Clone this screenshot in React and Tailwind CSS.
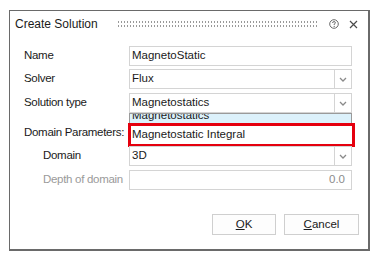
import React from 'react';

const font = { fontFamily: '"Liberation Sans", Arial, sans-serif' };

function Chevron({ color = '#8a8a8a' }) {
  return (
    <svg width="8" height="5" viewBox="0 0 8 5">
      <polyline points="1,1 4,4 7,1" fill="none" stroke={color} strokeWidth="1.3" />
    </svg>
  );
}

function TextBox({ value, muted, right }) {
  return (
    <div className={`h-[20px] w-[223px] border border-[#d4d4d4] bg-white flex items-center px-[2px] ${right ? 'justify-end pr-[6px]' : ''}`}>
      <span className={muted ? 'text-[#8c8c8c]' : 'text-[#1a1a1a]'}>{value}</span>
    </div>
  );
}

function Select({ value, children }) {
  return (
    <div className="relative h-[20px] w-[223px] border border-[#d4d4d4] bg-white flex">
      <div className="flex-1 flex items-center px-[2px] text-[#1a1a1a]">{value}</div>
      <div className="w-[17px] border-l border-[#d4d4d4] flex items-center justify-center">
        <Chevron />
      </div>
      {children}
    </div>
  );
}

function Row({ label, indent, muted, children, className = '' }) {
  return (
    <div className={`flex items-center h-[20px] ${className}`}>
      <div className={`w-[105px] shrink-0 whitespace-nowrap tracking-[-0.3px] ${indent ? 'pl-[19px]' : ''} ${muted ? 'text-[#9a9a9a]' : 'text-[#1a1a1a]'}`}>{label}</div>
      {children}
    </div>
  );
}

export default function App() {
  return (
    <div className="w-[378px] h-[259px] bg-white pt-[10px] pl-[9px] text-[11.5px] leading-none" style={font}>
      <div className="w-[361px] h-[241px] border border-[#6a6a6a] border-r-2 border-b-2 bg-white flex flex-col">
        <div className="h-[26px] flex items-center pl-[5px] pr-[10px]">
          <span className="text-[12px] text-[#1a1a1a] whitespace-nowrap">Create Solution</span>
          <div className="ml-[19px] w-[202px] h-[8px] bg-[radial-gradient(circle,#999999_0.8px,transparent_1.1px)] bg-[length:3px_4px]" />
          <div className="ml-auto flex items-center gap-[10px]">
            <svg width="10" height="10" viewBox="0 0 10 10">
              <circle cx="5" cy="5" r="4.3" fill="none" stroke="#6a6a6a" strokeWidth="1" />
              <path d="M3.6 4 Q3.6 2.6 5 2.6 Q6.4 2.6 6.4 3.8 Q6.4 4.6 5.2 5.1 L5.2 6" fill="none" stroke="#6a6a6a" strokeWidth="1" />
              <circle cx="5.2" cy="7.4" r="0.6" fill="#6a6a6a" />
            </svg>
            <svg width="9" height="9" viewBox="0 0 9 9">
              <path d="M1 1 L8 8 M8 1 L1 8" stroke="#4a4a4a" strokeWidth="1.2" />
            </svg>
          </div>
        </div>

        <div className="flex flex-col pl-[14px] pt-[9px]">
          <Row label="Name">
            <TextBox value="MagnetoStatic" />
          </Row>
          <Row label="Solver" className="mt-[3px]">
            <Select value="Flux" />
          </Row>
          <Row label="Solution type" className="mt-[4px]">
            <Select value="Magnetostatics">
              <div className="absolute top-[19px] left-[-1px] w-[223px] h-[12px] border border-[#9a9a9a] border-t-dotted bg-[#dcf1fb] overflow-hidden pl-[2px]">
                <div className="-mt-[4px] text-[#1a1a1a] whitespace-nowrap">Magnetostatics</div>
              </div>
              <div className="absolute top-[29px] left-[-2px] w-[227px] h-[24px] border-[3px] border-[#e5000e] bg-white flex items-center pl-[1px] text-[#1a1a1a] whitespace-nowrap">
                Magnetostatic Integral
              </div>
            </Select>
          </Row>
          <Row label="Domain Parameters:" className="mt-[10px]" />
          <Row label="Domain" indent className="mt-[3px]">
            <Select value="3D" />
          </Row>
          <Row label="Depth of domain" indent muted className="mt-[4px]">
            <TextBox value="0.0" muted right />
          </Row>
        </div>

        <div className="flex justify-end gap-[8px] pr-[9px] mt-[24px]">
          <button className="w-[64px] h-[21px] border border-[#cfcfcf] bg-[#fdfdfd] text-[#1a1a1a]">
            <span className="underline">O</span>K
          </button>
          <button className="w-[75px] h-[21px] border border-[#cfcfcf] bg-[#fdfdfd] text-[#1a1a1a]">
            <span className="underline">C</span>ancel
          </button>
        </div>
      </div>
    </div>
  );
}
